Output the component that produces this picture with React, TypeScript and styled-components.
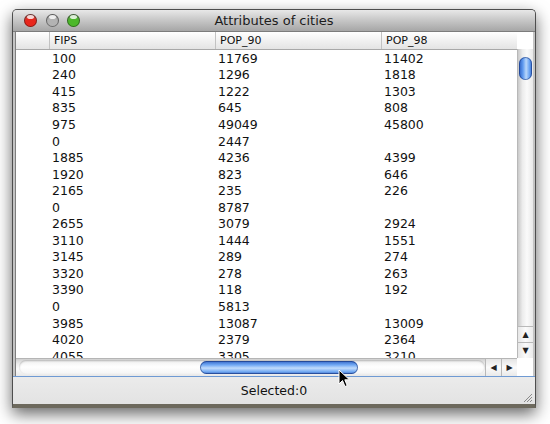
import React from 'react';
import styled, {createGlobalStyle} from 'styled-components';

const GlobalStyle = createGlobalStyle`
  html, body {
    margin: 0;
    padding: 0;
    background: #ffffff;
  }
  body {
    font-family: "DejaVu Sans", "Liberation Sans", sans-serif;
  }
`;

const Page = styled.div`
  width: 550px;
  height: 424px;
  padding: 9px 0 0 12px;
  box-sizing: border-box;
  position: relative;
`;

const Window = styled.div`
  width: 524px;
  height: 399px;
  box-sizing: border-box;
  border: 1px solid #4e4e4e;
  border-bottom: 4px solid #6d695d;
  border-radius: 5px 5px 0 0;
  box-shadow: 0 6px 16px rgba(0, 0, 0, 0.6);
  display: flex;
  flex-direction: column;
  background: #c4c4c4;
`;

const TitleBar = styled.div`
  height: 22px;
  flex: none;
  display: flex;
  align-items: center;
  position: relative;
  border-radius: 4px 4px 0 0;
  background: linear-gradient(#e8e8e8, #c9c9c9 45%, #a6a6a6);
  border-bottom: 1px solid #7c7c7c;
  box-sizing: border-box;
  padding-left: 11px;
  gap: 8.5px;
`;

const Light = styled.div<{color: string}>`
  width: 13px;
  height: 13px;
  border-radius: 50%;
  flex: none;
  background: radial-gradient(circle at 50% 70%, ${p => p.color} 0%, ${p => p.color} 45%, rgba(0,0,0,0.4) 100%);
  box-shadow: inset 0 0 0 1px rgba(0, 0, 0, 0.4);
  position: relative;
  &::after {
    content: '';
    position: absolute;
    left: 3px;
    top: 1px;
    width: 7px;
    height: 4px;
    border-radius: 50%;
    background: rgba(255, 255, 255, 0.8);
  }
`;

const Title = styled.div`
  position: absolute;
  left: 0;
  right: 0;
  text-align: center;
  font-size: 13px;
  color: #1c1c1c;
  pointer-events: none;
`;

const Frame = styled.div`
  flex: 1;
  display: flex;
  flex-direction: column;
  padding: 0 2px;
  background: #c4c4c4;
`;

const TableArea = styled.div`
  height: 326px;
  display: flex;
  border-left: 1px solid #7f7f7f;
  background: #fff;
`;

const Viewport = styled.div`
  flex: 1;
  overflow: hidden;
  display: flex;
  flex-direction: column;
`;

const cols = '33px 166px 166px 1fr';

const HeaderRow = styled.div`
  height: 18px;
  flex: none;
  display: grid;
  grid-template-columns: ${cols};
  background: linear-gradient(#ffffff, #f1f1f1 50%, #e4e4e4);
  border-bottom: 1px solid #a8a8a8;
  box-sizing: border-box;
`;

const HeaderCell = styled.div`
  font-size: 11px;
  line-height: 17px;
  padding-left: 4px;
  color: #111;
  border-left: 1px solid #c2c2c2;
  &:first-child {
    border-left: none;
  }
`;

const Row = styled.div`
  height: 16.55px;
  flex: none;
  display: grid;
  grid-template-columns: ${cols};
  align-items: center;
`;

const Cell = styled.div`
  font-size: 12.5px;
  padding-left: 3px;
  color: #111;
  white-space: nowrap;
`;

const VScroll = styled.div`
  width: 16px;
  flex: none;
  display: flex;
  flex-direction: column;
`;

const Corner = styled.div`
  height: 17px;
  flex: none;
  background: #fff;
`;

const VTrack = styled.div`
  flex: 1;
  position: relative;
  background: linear-gradient(90deg, #c9c9c9, #ececec 30%, #fafafa 60%, #e9e9e9);
  border-left: 1px solid #b8b8b8;
`;

const VThumb = styled.div`
  position: absolute;
  left: 1px;
  right: 1px;
  top: 8px;
  height: 23px;
  border-radius: 7px;
  background: linear-gradient(90deg, #2d5fc0, #5f9af0 30%, #b9d7fb 55%, #6aa3f2 80%, #3468c8);
  box-shadow: inset 0 0 0 1px rgba(20, 50, 120, 0.55);
`;

const ArrowBox = styled.div`
  height: 16px;
  flex: none;
  width: 16px;
  display: flex;
  align-items: center;
  justify-content: center;
  font-size: 8px;
  color: #222;
  background: linear-gradient(90deg, #e6e6e6, #fbfbfb 50%, #ebebeb);
  border-left: 1px solid #b8b8b8;
  border-top: 1px solid #b9b9b9;
  box-sizing: border-box;
`;

const HScrollRow = styled.div`
  height: 18px;
  flex: none;
  display: flex;
  border-left: 1px solid #7f7f7f;
  background: #fff;
`;

const HTrack = styled.div`
  flex: 1;
  position: relative;
  background: linear-gradient(#d0d0d0, #eeeeee 30%, #fbfbfb 60%, #e8e8e8);
  border-top: 1px solid #b5b5b5;
  box-sizing: border-box;
`;

const HGroove = styled.div`
  position: absolute;
  left: 3px;
  right: 0;
  top: 1px;
  bottom: 2px;
  border-radius: 8px;
  background: linear-gradient(#f0f0f0, #ffffff 50%, #f4f4f4);
  box-shadow: inset 0 1px 2px rgba(0, 0, 0, 0.25);
`;

const HThumb = styled.div`
  position: absolute;
  top: 2px;
  bottom: 2px;
  left: 184px;
  width: 158px;
  border-radius: 7px;
  background: linear-gradient(#3466c6, #70a8f4 30%, #c2dcfc 55%, #79aff4 80%, #3e70cd);
  box-shadow: inset 0 0 0 1px rgba(20, 50, 120, 0.6);
`;

const HArrow = styled.div`
  width: 16px;
  flex: none;
  display: flex;
  align-items: center;
  justify-content: center;
  font-size: 8px;
  color: #222;
  background: linear-gradient(#e4e4e4, #fbfbfb 50%, #e9e9e9);
  border-top: 1px solid #b5b5b5;
  border-left: 1px solid #b8b8b8;
  box-sizing: border-box;
`;

const HCorner = styled.div`
  width: 16px;
  flex: none;
  background: #fff;
`;

const StatusBar = styled.div`
  height: 28px;
  flex: none;
  border-top: 1px solid #6f9ad3;
  box-sizing: border-box;
  background: linear-gradient(#ebebeb, #e3e3e3);
  margin: 0 -2px;
  display: flex;
  align-items: center;
  justify-content: center;
  position: relative;
  font-size: 12.5px;
  color: #111;
`;

const Grip = styled.svg`
  position: absolute;
  right: 2px;
  bottom: 1px;
`;

const Cursor = styled.svg`
  position: absolute;
  left: 338px;
  top: 369px;
`;

const data: [string, string, string][] = [
  ['100', '11769', '11402'],
  ['240', '1296', '1818'],
  ['415', '1222', '1303'],
  ['835', '645', '808'],
  ['975', '49049', '45800'],
  ['0', '2447', ''],
  ['1885', '4236', '4399'],
  ['1920', '823', '646'],
  ['2165', '235', '226'],
  ['0', '8787', ''],
  ['2655', '3079', '2924'],
  ['3110', '1444', '1551'],
  ['3145', '289', '274'],
  ['3320', '278', '263'],
  ['3390', '118', '192'],
  ['0', '5813', ''],
  ['3985', '13087', '13009'],
  ['4020', '2379', '2364'],
  ['4055', '3305', '3210'],
];

export default function App() {
  return (
    <Page>
      <GlobalStyle/>
      <Window>
        <TitleBar>
          <Light color="#e8261c"/>
          <Light color="#b3b3b3"/>
          <Light color="#4cb82a"/>
          <Title>Attributes of cities</Title>
        </TitleBar>
        <Frame>
          <TableArea>
            <Viewport>
              <HeaderRow>
                <HeaderCell/>
                <HeaderCell>FIPS</HeaderCell>
                <HeaderCell>POP_90</HeaderCell>
                <HeaderCell>POP_98</HeaderCell>
              </HeaderRow>
              {data.map((r, i) => (
                <Row key={i}>
                  <Cell/>
                  <Cell>{r[0]}</Cell>
                  <Cell>{r[1]}</Cell>
                  <Cell>{r[2]}</Cell>
                </Row>
              ))}
            </Viewport>
            <VScroll>
              <Corner/>
              <VTrack>
                <VThumb/>
              </VTrack>
              <ArrowBox>▲</ArrowBox>
              <ArrowBox>▼</ArrowBox>
            </VScroll>
          </TableArea>
          <HScrollRow>
            <HTrack>
              <HGroove/>
              <HThumb/>
            </HTrack>
            <HArrow>◀</HArrow>
            <HArrow>▶</HArrow>
            <HCorner/>
          </HScrollRow>
          <StatusBar>
            Selected:0
            <Grip width="10" height="10" viewBox="0 0 10 10">
              <path d="M9 1 L1 9 M9 4 L4 9 M9 7 L7 9" stroke="#8a8a8a" strokeWidth="1"/>
            </Grip>
          </StatusBar>
        </Frame>
      </Window>
      <Cursor width="14" height="20" viewBox="0 0 14 20">
        <path d="M1 1 L1 15 L4.5 11.5 L7 17.5 L9.2 16.6 L6.8 10.8 L11.5 10.8 Z" fill="#000" stroke="#fff" strokeWidth="1"/>
      </Cursor>
    </Page>
  );
}
